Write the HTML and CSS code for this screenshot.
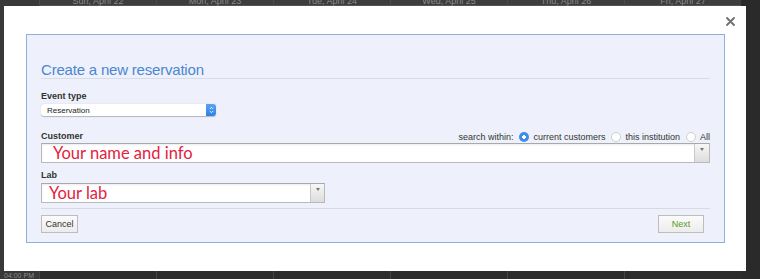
FILE: index.html
```html
<!DOCTYPE html>
<html lang="en">
<head>
    <meta charset="UTF-8">
    <meta name="viewport" content="width=device-width, initial-scale=1.0">
    <title>Create a new reservation</title>
    <link rel="stylesheet" href="styles.css">
</head>
<body>
    <div class="calendar">
        <div class="cal-head">
            <div class="cal-time"></div>
            <div class="cal-day">Sun, April 22</div>
            <div class="cal-day">Mon, April 23</div>
            <div class="cal-day">Tue, April 24</div>
            <div class="cal-day">Wed, April 25</div>
            <div class="cal-day">Thu, April 26</div>
            <div class="cal-day">Fri, April 27</div>
            <div class="cal-rest"></div>
        </div>
        <div class="cal-body">
            <div class="cal-time"><span>04:00 PM</span></div>
            <div class="cal-col"></div>
            <div class="cal-col"></div>
            <div class="cal-col"></div>
            <div class="cal-col"></div>
            <div class="cal-col"></div>
            <div class="cal-col"></div>
            <div class="cal-rest"></div>
        </div>
    </div>

    <div class="modal">
        <a href="#" class="modal-close" title="Close">
            <svg width="9" height="9" viewBox="0 0 9 9">
                <path d="M1 1 L8 8 M8 1 L1 8" stroke="#6f6f6f" stroke-width="1.8" stroke-linecap="round"/>
            </svg>
        </a>
        <div class="panel">
            <h2 class="panel-title">Create a new reservation</h2>

            <div class="field-label">Event type</div>
            <div class="popup">
                <span>Reservation</span>
                <span class="popup-stepper">
                    <svg width="5" height="8" viewBox="0 0 5 8">
                        <path d="M0.8 3 L2.5 1.3 L4.2 3 M0.8 5 L2.5 6.7 L4.2 5" stroke="#fff" stroke-width="0.9" fill="none"/>
                    </svg>
                </span>
            </div>

            <div class="customer-row">
                <div class="field-label">Customer</div>
                <div class="search-within">
                    <span>search within:</span>
                    <span class="radio checked"></span>
                    <span>current customers</span>
                    <span class="radio"></span>
                    <span>this institution</span>
                    <span class="radio"></span>
                    <span>All</span>
                </div>
            </div>
            <div class="combo combo-wide">
                <span class="hint hint-customer">Your name and info</span>
                <span class="combo-arrow"></span>
            </div>

            <div class="field-label lab-label">Lab</div>
            <div class="combo combo-lab">
                <span class="hint hint-lab">Your lab</span>
                <span class="combo-arrow"></span>
            </div>

            <div class="actions">
                <button type="button" class="btn btn-cancel">Cancel</button>
                <button type="button" class="btn btn-next">Next</button>
            </div>
        </div>
    </div>
</body>
</html>
```

FILE: styles.css
```css
* {
    margin: 0;
    padding: 0;
    box-sizing: border-box;
}

body {
    width: 760px;
    height: 279px;
    overflow: hidden;
    background: #2f2f2f;
    font-family: 'Liberation Sans', Arial, sans-serif;
    position: relative;
}

/* calendar behind the dialog */
.calendar {
    display: flex;
    flex-direction: column;
    height: 100%;
}

.cal-head,
.cal-body {
    display: grid;
    grid-template-columns: 39px repeat(6, 117px) 1fr;
}

.cal-head {
    height: 6px;
    background: #3d3d3d;
    border-bottom: 1px solid #555;
}

.cal-day {
    color: #8a8a8a;
    font-size: 9px;
    line-height: 10px;
    text-align: center;
    margin-top: -4px;
    border-left: 1px solid #4a4a4a;
}

.cal-body {
    flex: 1;
}

.cal-time {
    background: #393939;
    display: flex;
    align-items: flex-end;
}

.cal-time span {
    color: #8d8d8d;
    font-size: 7px;
    line-height: 8px;
    padding-left: 4px;
    margin-bottom: -1px;
}

.cal-col {
    border-left: 1px solid #444;
    background: #2c2c2c;
}

.cal-rest {
    background: #2a2a2a;
}

/* dialog */
.modal {
    position: absolute;
    left: 4px;
    top: 6px;
    width: 742px;
    height: 265px;
    background: #fff;
    padding: 28px 21px 0 22px;
}

.modal-close {
    position: absolute;
    left: 722px;
    top: 11px;
    display: block;
    line-height: 0;
}

.panel {
    height: 209px;
    border: 1px solid #8fafdc;
    background: #eef1fb;
    padding: 26px 14px 0;
    color: #333;
}

.panel-title {
    font-size: 15px;
    font-weight: normal;
    line-height: 17px;
    letter-spacing: -0.2px;
    color: #4a87d0;
    border-bottom: 1px solid #d8dce6;
}

.field-label {
    font-size: 9px;
    line-height: 11px;
    font-weight: bold;
    color: #333;
    margin-top: 12px;
}

.popup {
    margin-top: 2px;
    width: 175px;
    height: 12px;
    background: #fff;
    border-radius: 3px;
    box-shadow: 0 0.5px 1px rgba(0, 0, 0, 0.25);
    display: flex;
    align-items: center;
    justify-content: space-between;
    font-size: 8px;
    color: #222;
    padding-left: 6px;
}

.popup-stepper {
    width: 10px;
    height: 12px;
    border-radius: 0 3px 3px 0;
    background: linear-gradient(#5aa2f3, #2f7fe6);
    display: flex;
    align-items: center;
    justify-content: center;
}

.customer-row {
    margin-top: 15px;
    display: flex;
    justify-content: space-between;
    align-items: center;
    height: 11px;
}

.customer-row .field-label {
    margin-top: 0;
}

.search-within {
    display: flex;
    align-items: center;
    gap: 4px;
    font-size: 9px;
    color: #333;
}

.radio {
    width: 10px;
    height: 10px;
    border-radius: 50%;
    background: #fff;
    border: 1px solid #cfcfcf;
    margin-left: 2px;
}

.radio.checked {
    border: none;
    background: radial-gradient(circle, #fff 0 1.6px, #3a8ee8 2px);
}

.combo {
    margin-top: 1px;
    height: 20px;
    background: #fff;
    border: 1px solid #b9b9b9;
    border-top-color: #a9a9a9;
    box-shadow: inset 0 1px 2px rgba(0, 0, 0, 0.08);
    display: flex;
    align-items: center;
    justify-content: space-between;
}

.combo-lab {
    width: 284px;
    margin-top: 2px;
}

.hint {
    font-family: Lato, 'Open Sans', sans-serif;
    font-size: 16.5px;
    line-height: 18px;
    color: #e2223f;
}

.hint-customer {
    padding-left: 11px;
}

.hint-lab {
    padding-left: 7px;
}

.combo-arrow {
    align-self: stretch;
    width: 15px;
    border-left: 1px solid #c8c8c8;
    background: linear-gradient(#f7f7f7, #dcdcdc);
    position: relative;
}

.combo-lab .combo-arrow {
    width: 14px;
}

.combo-arrow::after {
    content: '';
    position: absolute;
    left: 5px;
    top: 4px;
    border-left: 2px solid transparent;
    border-right: 2px solid transparent;
    border-top: 3px solid #777;
}

.lab-label {
    margin-top: 7px;
}

.actions {
    margin-top: 5px;
    padding-top: 6px;
    border-top: 1px solid #d6dae3;
    display: flex;
    justify-content: space-between;
}

.btn {
    height: 18px;
    font-family: 'Liberation Sans', Arial, sans-serif;
    font-size: 9px;
    border: 1px solid #bdbdbd;
    background: linear-gradient(#fbfbfb, #ececec);
    color: #333;
    cursor: pointer;
}

.btn-cancel {
    width: 37px;
}

.btn-next {
    width: 46px;
    margin-right: 6px;
    color: #5a9a2c;
}
```
